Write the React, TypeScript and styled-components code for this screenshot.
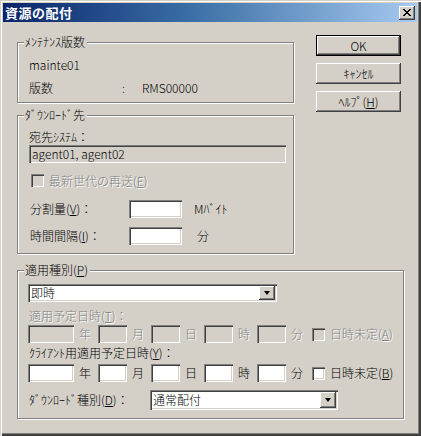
import styled, { createGlobalStyle, css } from 'styled-components';

const GlobalStyle = createGlobalStyle`
	html, body {
		margin: 0;
		padding: 0;
		background: #d4d0c8;
	}
	* {
		box-sizing: border-box;
	}
`;

const face = '#d4d0c8';
const shadow = '#808080';
const dark = '#404040';

const raised = css`
	background: ${face};
	box-shadow: inset -1px -1px ${dark}, inset 1px 1px #fff, inset -2px -2px ${shadow};
`;

const sunken = css`
	box-shadow: inset 1px 1px ${shadow}, inset 2px 2px ${dark}, inset -1px -1px #fff, inset -2px -2px ${face};
`;

const Window = styled.div`
	width: 421px;
	height: 436px;
	padding: 3px 4px 4px 3px;
	background: ${face};
	font-family: 'Noto Sans CJK JP', 'DejaVu Sans', sans-serif;
	font-size: 12px;
	font-weight: 300;
	line-height: 16px;
	color: #000;
	box-shadow: inset 1px 1px ${face}, inset 2px 2px #fff, inset -1px -1px ${dark}, inset -2px -2px ${dark},
		inset -3px -3px ${shadow};
	display: flex;
	flex-direction: column;
`;

const TitleBar = styled.div`
	height: 19px;
	display: flex;
	align-items: center;
	justify-content: space-between;
	padding: 0 2px 0 2px;
	background: linear-gradient(to right, #0a246a 0%, #3a6ea5 45%, #a6caf0 100%);
`;

const TitleText = styled.span`
	color: #fff;
	font-weight: bold;
	font-size: 13px;
	letter-spacing: 0.5px;
`;

const CloseButton = styled.div`
	width: 16px;
	height: 14px;
	${raised};
	display: flex;
	align-items: center;
	justify-content: center;
	padding-bottom: 1px;
`;

const Main = styled.div`
	display: grid;
	grid-template-columns: 277px 85px;
	column-gap: 22px;
	row-gap: 16px;
	padding: 13px 0 0 14px;
`;

const LeftColumn = styled.div`
	margin-top: 7px;
	display: flex;
	flex-direction: column;
	gap: 12px;
`;

const ButtonColumn = styled.div`
	display: flex;
	flex-direction: column;
	gap: 7px;
`;

const PushButton = styled.div<{ $default?: boolean }>`
	height: 21px;
	display: flex;
	align-items: center;
	justify-content: center;
	${raised};
	${({ $default }) =>
		$default &&
		css`
			border: 1px solid #000;
		`};
`;

const GroupBox = styled.div<{ $wide?: boolean }>`
	position: relative;
	border: 1px solid ${shadow};
	box-shadow: inset 1px 1px #fff, 1px 1px #fff;
	padding: 13px 0 0 11px;
	display: flex;
	flex-direction: column;
	${({ $wide }) =>
		$wide &&
		css`
			grid-column: 1 / -1;
			width: 387px;
			padding-left: 10px;
		`};
`;

const Legend = styled.span`
	position: absolute;
	top: -9px;
	left: 6px;
	padding: 0 2px 0 1px;
	background: ${face};
`;

const Text = styled.div<{ $disabled?: boolean; $mt?: number }>`
	height: 16px;
	white-space: nowrap;
	margin-top: ${({ $mt }) => $mt ?? 0}px;
	${({ $disabled }) =>
		$disabled &&
		css`
			color: ${shadow};
			text-shadow: 1px 1px 0 #fff;
		`};
`;

const InfoRow = styled.div<{ $mt?: number }>`
	display: grid;
	grid-template-columns: 93px 20px auto;
	height: 16px;
	margin-top: ${({ $mt }) => $mt ?? 0}px;
`;

const ReadonlyBox = styled.div`
	width: 257px;
	height: 18px;
	padding: 1px 3px;
	${sunken};
	background: ${face};
`;

const CheckRow = styled.div<{ $mt?: number; $disabled?: boolean }>`
	display: flex;
	align-items: center;
	gap: 5px;
	margin-top: ${({ $mt }) => $mt ?? 0}px;
	margin-left: 2px;
	height: 15px;
	${({ $disabled }) =>
		$disabled &&
		css`
			color: ${shadow};
			text-shadow: 1px 1px 0 #fff;
		`};
`;

const CheckBox = styled.span<{ $disabled?: boolean }>`
	width: 13px;
	height: 13px;
	flex: none;
	background: ${({ $disabled }) => ($disabled ? face : '#fff')};
	${sunken};
`;

const FieldRow = styled.div<{ $mt: number }>`
	display: flex;
	align-items: center;
	margin-top: ${({ $mt }) => $mt}px;
	height: 18px;
`;

const FieldLabel = styled.span<{ $width: number }>`
	width: ${({ $width }) => $width}px;
	padding-left: 1px;
	white-space: nowrap;
`;

const Field = styled.span<{ $width: number; $disabled?: boolean }>`
	width: ${({ $width }) => $width}px;
	height: 18px;
	flex: none;
	background: ${({ $disabled }) => ($disabled ? face : '#fff')};
	${sunken};
`;

const Unit = styled.span<{ $left: number; $right?: number; $disabled?: boolean }>`
	margin-left: ${({ $left }) => $left}px;
	margin-right: ${({ $right }) => $right ?? 0}px;
	white-space: nowrap;
	${({ $disabled }) =>
		$disabled &&
		css`
			color: ${shadow};
			text-shadow: 1px 1px 0 #fff;
		`};
`;

const Combo = styled.div<{ $width: number; $height: number; $mt?: number }>`
	width: ${({ $width }) => $width}px;
	height: ${({ $height }) => $height}px;
	margin-top: ${({ $mt }) => $mt ?? 0}px;
	background: #fff;
	${sunken};
	padding: 2px;
	display: flex;
	align-items: center;
	flex: none;
`;

const ComboText = styled.span`
	flex: 1;
	padding-left: 1px;
`;

const ComboArrow = styled.span`
	width: 16px;
	height: 100%;
	${raised};
	display: flex;
	align-items: center;
	justify-content: center;

	&::after {
		content: '';
		border-left: 3.5px solid transparent;
		border-right: 3.5px solid transparent;
		border-top: 4px solid #000;
	}
`;

const DateFields = ({ disabled, flag }: { disabled?: boolean; flag: string }) => (
	<>
		<Field $width={46} $disabled={disabled} />
		<Unit $left={5} $right={7} $disabled={disabled}>年</Unit>
		<Field $width={29} $disabled={disabled} />
		<Unit $left={5} $right={7} $disabled={disabled}>月</Unit>
		<Field $width={29} $disabled={disabled} />
		<Unit $left={5} $right={7} $disabled={disabled}>日</Unit>
		<Field $width={29} $disabled={disabled} />
		<Unit $left={5} $right={7} $disabled={disabled}>時</Unit>
		<Field $width={29} $disabled={disabled} />
		<Unit $left={5} $right={7} $disabled={disabled}>分</Unit>
		<CheckRow $disabled={disabled}>
			<CheckBox $disabled={disabled} />
			<span>
				日時未定(<u>{flag}</u>)
			</span>
		</CheckRow>
	</>
);

export default function App() {
	return (
		<>
			<GlobalStyle />
			<Window>
				<TitleBar>
					<TitleText>資源の配付</TitleText>
					<CloseButton>
						<svg width="8" height="7" viewBox="0 0 8 7" shapeRendering="crispEdges">
							<path d="M0 0h2v1h1v1h2V1h1V0h2v1h-1v1h-1v1h-1v1h1v1h1v1h1v1h-2v-1h-1v-1h-2v1h-1v1H0v-1h1v-1h1V4h1V3H2V2H1V1H0z" fill="#000" />
						</svg>
					</CloseButton>
				</TitleBar>
				<Main>
					<LeftColumn>
						<GroupBox style={{ paddingTop: 14, paddingBottom: 6 }}>
							<Legend>ﾒﾝﾃﾅﾝｽ版数</Legend>
							<Text>mainte01</Text>
							<InfoRow $mt={7}>
								<span>版数</span>
								<span>:</span>
								<span>RMS00000</span>
							</InfoRow>
						</GroupBox>
						<GroupBox style={{ paddingBottom: 8 }}>
							<Legend>ﾀﾞｳﾝﾛｰﾄﾞ先</Legend>
							<Text>宛先ｼｽﾃﾑ：</Text>
							<ReadonlyBox>agent01, agent02</ReadonlyBox>
							<CheckRow $mt={10} $disabled>
								<CheckBox $disabled />
								<span>
									最新世代の再送(<u>E</u>)
								</span>
							</CheckRow>
							<FieldRow $mt={12}>
								<FieldLabel $width={100}>
									分割量(<u>V</u>)：
								</FieldLabel>
								<Field $width={53} />
								<Unit $left={12}>Mﾊﾞｲﾄ</Unit>
							</FieldRow>
							<FieldRow $mt={9}>
								<FieldLabel $width={100}>
									時間間隔(<u>I</u>)：
								</FieldLabel>
								<Field $width={53} />
								<Unit $left={15}>分</Unit>
							</FieldRow>
						</GroupBox>
					</LeftColumn>
					<ButtonColumn>
						<PushButton $default>OK</PushButton>
						<PushButton>ｷｬﾝｾﾙ</PushButton>
						<PushButton>
							<span>
								ﾍﾙﾌﾟ(<u>H</u>)
							</span>
						</PushButton>
					</ButtonColumn>
					<GroupBox $wide style={{ paddingBottom: 8 }}>
						<Legend>
							適用種別(<u>P</u>)
						</Legend>
						<Combo $width={249} $height={18}>
							<ComboText>即時</ComboText>
							<ComboArrow />
						</Combo>
						<Text $disabled $mt={6} style={{ paddingLeft: 1 }}>
							適用予定日時(<u>T</u>)：
						</Text>
						<FieldRow $mt={1}>
							<DateFields disabled flag="A" />
						</FieldRow>
						<Text $mt={2} style={{ paddingLeft: 1 }}>
							ｸﾗｲｱﾝﾄ用適用予定日時(<u>Y</u>)：
						</Text>
						<FieldRow $mt={3}>
							<DateFields flag="B" />
						</FieldRow>
						<FieldRow $mt={8} style={{ height: 20 }}>
							<FieldLabel $width={122}>
								ﾀﾞｳﾝﾛｰﾄﾞ種別(<u>D</u>)：
							</FieldLabel>
							<Combo $width={188} $height={20}>
								<ComboText>通常配付</ComboText>
								<ComboArrow />
							</Combo>
						</FieldRow>
					</GroupBox>
				</Main>
			</Window>
		</>
	);
}
